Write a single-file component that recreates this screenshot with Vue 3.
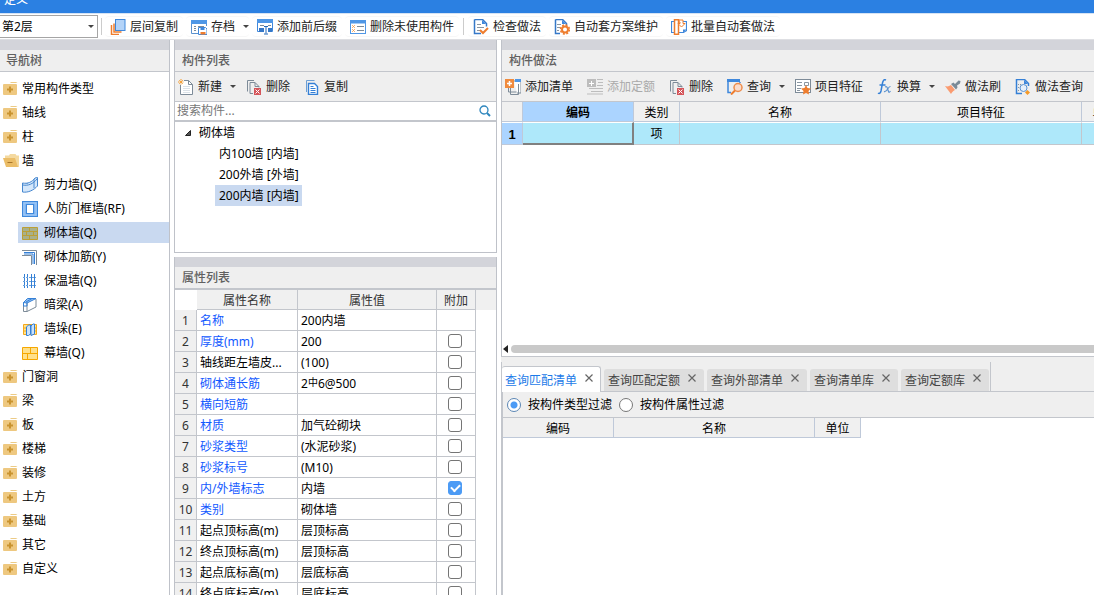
<script setup>
import { ref } from 'vue'

const icons = {
  layers: '<path d="M1.500 6v9.500H9M4 4.500V13h7.500" fill="none" stroke="#ee7d2e" stroke-width="1.500"/><rect x="5.500" y=".5" width="9.500" height="11" fill="#b3d3f8" stroke="#3f88dc"/>',
  archive: '<path d="M.5 3v11.500H7M15.500 3v4" fill="none" stroke="#5b92cf"/><path d="M0 1h16v4H0z" fill="#4f97e6"/><path d="M3 7.500h2M7 7.500h6M3 9.500h2M3 11.500h2" stroke="#7d8b98"/><path d="M7.500 8.500h7l1.500 1.500v5.500H7.500z" fill="#fff" stroke="#3f88dc"/><path d="M9.500 9h4v2h-4z" fill="#3f88dc"/><path d="M9.500 13h5v2.500h-5z" fill="#ee7d2e"/>',
  affix: '<path d="M.5 2v10.500H2M15.500 2v10.500H14" fill="none" stroke="#3f88dc"/><path d="M0 0h16v4H0z" fill="#4f97e6"/><path d="M3 6.500h4M11 6.500h3" stroke="#7d8b98"/><path d="M2 9h5v4H2zM11 9h4v4h-4z" fill="#3578c8"/><path d="M7 7.500h4M9 7.500v7M7 15h4" stroke="#2469b9" fill="none"/>',
  unused: '<rect x=".5" y="1.500" width="15" height="13" fill="#fff" stroke="#4f97e6"/><path d="M0 1h16v3.500H0z" fill="#4f97e6"/><path d="M2 6l3 3m0-3L2 9m0 1 3 3m0-3-3 3" stroke="#f4953b" stroke-dasharray="1 .5"/><path d="M7 7.500h7M7 11.500h7" stroke="#7d8b98"/>',
  check: '<path d="M1.500.5h8l4 4v3M1.500.5v14H8" fill="none" stroke="#3578c8" stroke-width="1.500"/><path d="M9 1v4h4z" fill="#3f88dc"/><path d="M4 5.500h4M4 8.500h7M4 11.500h3" stroke="#8a96a1"/><path d="m7 11 3 3 5-5" stroke="#ee7d2e" stroke-width="2" fill="none"/>',
  gear: '<path d="M1.500.5h7l4 4v2M1.500.5v14H6" fill="none" stroke="#3578c8" stroke-width="1.500"/><path d="M8 1v4h4z" fill="#3f88dc"/><path d="M3 5.500h4M3 8.500h3M3 11.500h2" stroke="#8a96a1"/><circle cx="11" cy="10.500" r="3" fill="#fff" stroke="#ee7d2e" stroke-width="2"/><circle cx="11" cy="10.500" r="4.500" fill="none" stroke="#ee7d2e" stroke-width="1.500" stroke-dasharray="2 1.534"/>',
  batch: '<path d="M3 2.500H.5v11H3M12 2.500h3.500v9l-3 2H8" fill="none" stroke="#3f88dc" stroke-width="1.200"/><rect x="3.500" y=".75" width="4" height="14.500" fill="#fff" stroke="#ee7d2e" stroke-width="1.500"/><path d="M8 1h4v3.500h2L10.500 8 7 4.500h2V3H8z" fill="#fff" stroke="#ee7d2e"/><path d="M12 13.500v-3h3.500z" fill="#3f88dc"/>',
  create: '<path d="M2.500 6v9.500h12V5.500l-4-4H6" fill="#fff" stroke="#7d8b98"/><path d="M10.500 1.500v4h4" fill="none" stroke="#7d8b98"/><path d="M5 7.500h7M5 9.500h7M5 11.500h7M5 13.500h7" stroke="#dbe2e8"/><path d="m1 1 4 4m0-4L1 5M3 0v6M0 3h6" stroke="#f59a28" stroke-dasharray="1 .5"/>',
  remove: '<path d="M1.500 12.500v-11H8M4 14.500V3.500h5l4 4v1M4 14.500h3M9 3.500v4h4" fill="none" stroke="#7d8b98"/><path d="M8 9h7v7H8z" fill="#d5555a"/><path d="m9.500 10.500 4 4m0-4-4 4" stroke="#fff"/>',
  copy: '<path d="M2.500 13V1.500h8" fill="none" stroke="#6d9fd4"/><path d="M4.500 4.500h6l3 3v8h-9z" fill="#fff" stroke="#3580d6" stroke-width="1.400"/><path d="M6.500 7.500h3M6.500 9.500h5M6.500 11.500h5M6.500 13.500h5" stroke="#3580d6"/>',
  addList: '<path d="M9 2h7v12h-4" fill="#fff" stroke="#7d8b98"/><path d="M10 0h6v3h-6z" fill="#4f97e6"/><path d="M5.500 9v6.500h8V5M3.500 9v4h8" fill="none" stroke="#7d8b98"/><path d="M0 0h9v9H0z" fill="#f08b3e"/><path d="M4.500 2v5M2 4.500h5" stroke="#fff" stroke-width="1.500"/>',
  addQuota: '<path d="M0 0h9v8H0z" fill="#bdbdbd"/><path d="M4.500 2v5M2 4.500h5" stroke="#fff"/><path d="M10 .5h6M11 3.500h5M10 6.500h6M2 9.500h14M4 12.500h12M0 15h16" stroke="#bdbdbd"/>',
  find: '<path d="M1 3v10.500h3M13 3v1" fill="none" stroke="#3f88dc" stroke-width="1.500"/><path d="M0 0h13v3H0z" fill="#3f88dc"/><circle cx="11" cy="8.500" r="4" fill="#fbdccb" stroke="#ee8c4b" stroke-width="1.500"/><path d="m8 11.500-4 4" stroke="#ee7d2e" stroke-width="2"/>',
  feature: '<rect x=".5" y=".5" width="15" height="13" fill="#fff" stroke="#7d8b98"/><path d="M2 3.500h5M2 6.500h5M2 9.500h4M2 11.500h3" stroke="#8a96a1"/><path d="M9.500 3.500h4v3h-4z" fill="none" stroke="#8a96a1"/><path d="m11 6 1.500 3 3.500.5-2.500 2.500.5 3.500-3-1.500-3 1.500.500-3.500L6 9.500 9.500 9z" fill="#ee7d2e"/>',
  fx: '<path d="M9 1C7 0 6 1.500 5.500 4L4 12c-.5 2-1.500 3-3 2M2.500 6h6" fill="none" stroke="#3580d6" stroke-width="1.500"/><path d="M8 8c2-1 2 0 3 3s1 3 2.500 1M13.500 7.500C11 7 10 14 7 12.500" fill="none" stroke="#5b92cf" stroke-width="1.200"/>',
  brush: '<path d="M0 7c3 1 4 0 6-1l4 5c-2 1-3 2-4 4z" fill="#fa9b70"/><path d="m6 5 2.500-1.500L10 5l3.500-3.500L15.500 2l-.5 2.500-3 2 .5 2L11 10.500z" fill="#7b8b98"/>',
  lookup: '<path d="M13.500 7V4.500l-4-4h-8v14H7" fill="none" stroke="#3580d6" stroke-width="1.500"/><path d="M9 1v4h4z" fill="#3f88dc"/><path d="M3 5.500h3M3 8.500h2M3 11.500h2" stroke="#8a96a1" stroke-dasharray="1 1"/><circle cx="8.500" cy="9" r="3.500" fill="#e6f0fb" stroke="#5b92cf"/><path d="m12.500 11 2.500 2.500-2.500 2.500-2.500-2.500z" fill="#f59a28"/>',
  closed: '<path d="M8 1h5l1.500 1H7z" fill="#eccb86"/><path d="M1 3h12q1 0 1 1v9q0 1-1 1H1q-1 0-1-1V4q0-1 1-1z" fill="#eec880"/><path d="M7 5.500v6M4 8.500h6" stroke="#c9932f" stroke-width="2"/>',
  open: '<path d="M7 1h5.500l1 1.500H16V14h-2L11 5H2V2.500h4z" fill="#f4d99f"/><path d="M0 5h12l3 9H3z" fill="#ebbd67"/><path d="M4.500 9.500h5" stroke="#a8762b"/>',
  shear: '<path d="M.5 6C6 7 10 5 13 1l2.500-.5V9C12 13 6 16 .5 15z" fill="#d4e7fb" stroke="#4687cf"/><path d="M1 8c5 1 10-1 14-6M12 2v9M5 7V6" fill="none" stroke="#4687cf"/>',
  frame: '<rect x=".5" y=".5" width="15" height="15" fill="#7db3f1" stroke="#3f88dc"/><rect x="2" y="2" width="12" height="12" fill="none" stroke="#a5cbf5"/><rect x="4.500" y="3.500" width="7" height="9" fill="#fff" stroke="#3f88dc"/>',
  brick: '<path d="M.5 2.500h15v12H.5zM.5 6.500h15M.5 10.500h15M7.500 2.500v4M4.500 6.500v4M11.500 6.500v4M7.500 10.500v4" fill="#a8b08c" stroke="#bb9f35"/>',
  rebar: '<path d="M0 1.500h14.500V16M0 6.500h9.500V16" fill="none" stroke="#7d8b98"/><path d="M2 3.500h10.500V15M2 5h9v10" fill="none" stroke="#3580d6"/>',
  insul: '<path d="M2.500 1v14M5.500 1v14M9.500 1v14M12.500 1v14" stroke="#3580d6"/><path d="M1 4.500h13M1 8.500h13M1 12.500h13" stroke="#6aa3df" stroke-dasharray="2 1"/>',
  beam: '<path d="M1.500 5.500v9H5L14 10V2" fill="#fff" stroke="#7d8b98"/><path d="M5 14.500V6" stroke="#7d8b98"/><path d="M1.500 5.500 5.500 1.500H14L5 6z" fill="#8fc0f5" stroke="#3580d6"/><path d="M1.500 5.500V9H5V6M4 5l6-3.500" fill="none" stroke="#3580d6"/>',
  pier: '<path d="M1.500 3.500h13v10h-13zM1 7h14M1 10h14" fill="#ffe38f" stroke="#f5a91b"/><path d="m4.500 6 2-2h2v9l-2 1.500h-2zM9 5l2-2h1.500v10L9 14.500z" fill="#cbe2fa" stroke="#3580d6"/>',
  curtain: '<path d="M.5 2.500h15v12H.5zM.5 8.500h15M8.500 2.500v6M5.500 8.500v6" fill="#ffe08a" stroke="#f6a700"/>',
}

const mainTools = [
  { t: '层间复制', i: 'layers' },
  { t: '存档', i: 'archive', menu: true },
  { t: '添加前后缀', i: 'affix' },
  { t: '删除未使用构件', i: 'unused' },
  { sep: true },
  { t: '检查做法', i: 'check' },
  { t: '自动套方案维护', i: 'gear' },
  { t: '批量自动套做法', i: 'batch' },
]
const listTools = [
  { t: '新建', i: 'create', menu: true },
  { t: '删除', i: 'remove' },
  { t: '复制', i: 'copy' },
]
const methodTools = [
  { t: '添加清单', i: 'addList' },
  { t: '添加定额', i: 'addQuota', off: true },
  { t: '删除', i: 'remove' },
  { t: '查询', i: 'find', menu: true },
  { t: '项目特征', i: 'feature' },
  { t: '换算', i: 'fx', menu: true },
  { t: '做法刷', i: 'brush' },
  { t: '做法查询', i: 'lookup' },
]
const top = (t) => ({ t, i: 'closed' })
const sub = (t, i) => ({ t, i, sub: true })
const nav = [
  top('常用构件类型'), top('轴线'), top('柱'), { t: '墙', i: 'open' },
  sub('剪力墙(Q)', 'shear'), sub('人防门框墙(RF)', 'frame'), sub('砌体墙(Q)', 'brick'),
  sub('砌体加筋(Y)', 'rebar'), sub('保温墙(Q)', 'insul'), sub('暗梁(A)', 'beam'),
  sub('墙垛(E)', 'pier'), sub('幕墙(Q)', 'curtain'),
  top('门窗洞'), top('梁'), top('板'), top('楼梯'), top('装修'), top('土方'),
  top('基础'), top('其它'), top('自定义'),
]
const activeNav = ref('砌体墙(Q)')

const components = ['内100墙 [内墙]', '200外墙 [外墙]', '200内墙 [内墙]']
const activeComponent = ref('200内墙 [内墙]')

const props = ref([
  { n: '名称', v: '200内墙', blue: true, plain: true },
  { n: '厚度(mm)', v: '200', blue: true },
  { n: '轴线距左墙皮...', v: '(100)' },
  { n: '砌体通长筋', v: '2', mark: '中', rest: '6@500', blue: true },
  { n: '横向短筋', v: '', blue: true },
  { n: '材质', v: '加气砼砌块', blue: true },
  { n: '砂浆类型', v: '(水泥砂浆)', blue: true },
  { n: '砂浆标号', v: '(M10)', blue: true },
  { n: '内/外墙标志', v: '内墙', blue: true, on: true },
  { n: '类别', v: '砌体墙', blue: true },
  { n: '起点顶标高(m)', v: '层顶标高' },
  { n: '终点顶标高(m)', v: '层顶标高' },
  { n: '起点底标高(m)', v: '层底标高' },
  { n: '终点底标高(m)', v: '层底标高' },
])

const tabs = ['查询匹配清单', '查询匹配定额', '查询外部清单', '查询清单库', '查询定额库']
const activeTab = ref(tabs[0])
const filter = ref('type')
const search = ref('')
</script>

<template>
  <div class="app">
    <header class="title">定义</header>

    <div class="maintools">
      <div class="floor">
        <select aria-label="楼层"><option>第2层</option></select>
        <i class="caret"></i>
      </div>
      <span class="sep"></span>
      <template v-for="(b, k) in mainTools" :key="k">
        <span v-if="b.sep" class="sep mid"></span>
        <button v-else type="button" class="boxed" :class="{ menu: b.menu }">
          <svg class="ic" viewBox="0 0 16 16" v-html="icons[b.i]"></svg>{{ b.t }}<i v-if="b.menu" class="caret"></i>
        </button>
      </template>
    </div>

    <main>
      <aside class="panel navpanel">
        <div class="strip"></div>
        <h2>导航树</h2>
        <ul class="nav">
          <li v-for="n in nav" :key="n.t">
            <button type="button" :class="{ sub: n.sub, active: n.t === activeNav }" @click="activeNav = n.t">
              <svg class="ic" viewBox="0 0 16 16" v-html="icons[n.i]"></svg>{{ n.t }}
            </button>
          </li>
        </ul>
      </aside>

      <div class="middle">
        <section class="panel boxpanel">
          <div class="strip"></div>
          <h2>构件列表</h2>
          <div class="tools">
            <button v-for="b in listTools" :key="b.t" type="button" :class="{ menu: b.menu }">
              <svg class="ic" viewBox="0 0 16 16" v-html="icons[b.i]"></svg>{{ b.t }}<i v-if="b.menu" class="caret"></i>
            </button>
          </div>
          <div class="search">
            <input v-model="search" type="text" placeholder="搜索构件..." aria-label="搜索构件" />
            <svg viewBox="0 0 12 12"><circle cx="5" cy="5" r="4" fill="none" stroke="#2e86bd" stroke-width="1.300" /><path d="m8 8 3 3" stroke="#2e86bd" stroke-width="2" /></svg>
          </div>
          <div class="tree">
            <div class="root"><svg viewBox="0 0 8 8"><path d="M6.500 1.500v5h-5z" fill="#555" stroke="#222" /></svg>砌体墙</div>
            <button v-for="c in components" :key="c" type="button" :class="{ active: c === activeComponent }" @click="activeComponent = c">{{ c }}</button>
          </div>
        </section>

        <section class="panel boxpanel props">
          <div class="strip"></div>
          <h2 class="thick">属性列表</h2>
          <table>
            <colgroup><col class="c-no" /><col class="c-name" /><col class="c-val" /><col class="c-add" /><col /></colgroup>
            <thead>
              <tr><th class="corner"></th><th>属性名称</th><th>属性值</th><th>附加</th><th class="fill"></th></tr>
            </thead>
            <tbody>
              <tr v-for="(p, k) in props" :key="p.n">
                <th scope="row">{{ k + 1 }}</th>
                <td :class="{ blue: p.blue }">{{ p.n }}</td>
                <td>{{ p.v }}<span v-if="p.mark" class="mark">{{ p.mark }}</span>{{ p.rest }}</td>
                <td class="tick"><input v-if="!p.plain" v-model="p.on" type="checkbox" :aria-label="p.n + ' 附加'" /></td>
                <td class="blank"></td>
              </tr>
            </tbody>
          </table>
        </section>
      </div>

      <div class="right">
        <section class="panel method">
          <div class="strip"></div>
          <h2>构件做法</h2>
          <div class="tools wide">
            <button v-for="b in methodTools" :key="b.t" type="button" :class="{ menu: b.menu }" :disabled="b.off">
              <svg class="ic" viewBox="0 0 16 16" v-html="icons[b.i]"></svg>{{ b.t }}<i v-if="b.menu" class="caret"></i>
            </button>
          </div>
          <div class="gridwrap">
            <table class="grid">
              <colgroup><col class="g-no" /><col class="g-code" /><col class="g-kind" /><col class="g-long" /><col class="g-long" /><col class="g-kind" /></colgroup>
              <thead>
                <tr><th></th><th class="cur">编码</th><th>类别</th><th>名称</th><th>项目特征</th><th>单位</th></tr>
              </thead>
              <tbody>
                <tr><th scope="row">1</th><td class="cell"></td><td>项</td><td></td><td></td><td></td></tr>
              </tbody>
            </table>
          </div>
          <div class="hscroll"><svg viewBox="0 0 5 8"><path d="M5 0v8L0 4z" fill="#222" /></svg><span></span></div>
        </section>

        <section class="query">
          <div class="tabs">
            <div v-for="t in tabs" :key="t" class="tab" :class="{ on: t === activeTab }">
              <button type="button" @click="activeTab = t">{{ t }}</button>
              <button type="button" class="x" :aria-label="'关闭' + t"><svg viewBox="0 0 8 8"><path d="m.5.5 7 7m0-7-7 7" stroke="#666" stroke-width="1.200" /></svg></button>
            </div>
            <span class="tabend"></span>
          </div>
          <div class="filters">
            <label><input v-model="filter" type="radio" name="filter" value="type" />按构件类型过滤</label>
            <label><input v-model="filter" type="radio" name="filter" value="prop" />按构件属性过滤</label>
          </div>
          <div class="result">
            <table>
              <colgroup><col class="g-code" /><col class="g-long" /><col class="g-kind" /></colgroup>
              <thead><tr><th>编码</th><th>名称</th><th>单位</th></tr></thead>
            </table>
          </div>
        </section>
      </div>
    </main>
  </div>
</template>

<style>
body { margin: 0; }
</style>

<style scoped>
.app {
  display: flex; flex-direction: column; height: 100vh; overflow: hidden;
  background: #fff; color: #000;
  font: 12px/18px "Noto Sans", "Noto Sans CJK SC", sans-serif;
}
.app * { box-sizing: border-box; }
button, input, select { font: inherit; color: inherit; }
button { display: flex; align-items: center; margin: 0; padding: 0; border: 0; background: none; white-space: nowrap; }
.ic { width: 16px; height: 16px; flex: none; }
.caret { border: 3px solid transparent; border-top-color: #444; border-bottom: 0; flex: none; }

.title {
  display: flex; align-items: flex-end; flex: none; height: 13px; padding: 0 4px 4px; overflow: hidden;
  background: #2b80e2; color: #fff;
}
.maintools {
  display: flex; align-items: center; gap: 3px; flex: none; height: 27px; overflow: hidden;
  border-top: 1px solid #d5e3f4; border-bottom: 1px solid #dedfe3;
}
.floor { position: relative; width: 98px; height: 23px; }
.floor select { width: 100%; height: 100%; padding: 0 2px; border: 1px solid #a5a5a5; border-left: 0; border-radius: 0; background: #fff; appearance: none; }
.floor .caret { position: absolute; right: 4px; top: 10px; }
.sep { width: 1px; height: 17px; background: #ccc; }
.sep.mid { margin: 0 1px; }
.boxed { gap: 4px; height: 21px; padding: 0 5px; border: 1px solid #f7f7f7; border-width: 1px 0; border-radius: 4px; color: #222; }
.menu .caret { margin-left: 4px; }
.boxed.menu { padding-right: 0; }

main { display: flex; gap: 4px; flex: 1; min-height: 0; }
.panel { display: flex; flex-direction: column; min-height: 0; }
.strip { flex: none; height: 10px; background: #d3d4da; }
h2 {
  flex: none; height: 22px; margin: 0; padding: 0 7px; border-bottom: 1px solid #c3c6cc;
  background: #efefef; color: #606060; font-size: 12px; font-weight: 500; line-height: 21px;
}
h2.thick { height: 23px; border-bottom-width: 2px; }
.navpanel { flex: none; width: 170px; border-right: 1px solid #bfc2c9; }
.navpanel h2 { padding-left: 6px; }
.nav { margin: 0; padding: 4px 0 0; list-style: none; }
.nav li { height: 24px; padding: 2px 0 1px; }
.nav button { gap: 3px; width: 100%; height: 21px; padding-left: 3px; }
.nav .sub { gap: 6px; width: calc(100% - 18px); margin-left: 18px; padding-left: 4px; }
.nav .active, .tree .active { background: #c9d9f0; }

.middle { display: flex; flex-direction: column; gap: 4px; flex: none; width: 323px; }
.boxpanel { border: 1px solid #bfc2c9; border-width: 0 1px 1px; }
.tools { display: flex; align-items: center; flex: none; height: 30px; overflow: hidden; border-bottom: 1px solid #c3c6cc; background: #efefef; color: #222; }
.tools button { gap: 4px; height: 100%; padding: 0 8px 0 6px; }
.tools button:first-child { padding-left: 3px; }
.tools .menu { padding-right: 4px; }
.tools.wide button { padding: 0 7px; }
.tools.wide button:first-child { padding-left: 3px; }
.tools.wide .menu { padding-right: 3px; }
.tools button:disabled { color: #aaa; }
.search { display: flex; align-items: center; flex: none; height: 20px; padding-right: 5px; border-bottom: 2px solid #c3c6cc; }
.search input { flex: 1; min-width: 0; height: 18px; padding: 0 2px; border: 0; background: none; outline: none; }
.search input::placeholder { color: #777; }
.search svg { width: 12px; height: 12px; }
.tree { height: 130px; }
.root { display: flex; align-items: center; gap: 7px; height: 21px; padding-left: 9px; }
.root svg { width: 8px; height: 8px; }
.tree button { height: 21px; margin-left: 40px; padding: 0 3px 0 4px; }

.props { flex: 1; overflow: hidden; border-bottom: 0; }
table { border-collapse: separate; border-spacing: 0; table-layout: fixed; }
th, td { height: 21px; padding: 2px 0 0; overflow: hidden; font-weight: 400; line-height: 18px; white-space: nowrap; border: 1px solid #c3c6cc; border-width: 0 1px 1px 0; }
.props table { flex: none; width: 100%; }
.c-no { width: 22px; }
.c-name { width: 101px; }
.c-val { width: 139px; }
.c-add { width: 39px; }
.props th { background: #f0f0f0; color: #333; }
.props thead th { height: 20px; line-height: 17px; }
.props thead .corner { background: #fff; border-color: #fff; }
.props .fill { border: 0; }
.props td { padding: 2px 3px 0; }
.props td.blue { color: #1259ff; }
.props td.blank { border: 0; }
.mark { font-size: 10px; line-height: 10px; vertical-align: 2px; }
.props td.tick { padding: 0 2px 0 0; }
.tick input {
  display: block; width: 14px; height: 14px; margin: 0 auto; border: 1px solid #757575; border-radius: 3px;
  appearance: none; background: #fff;
}
.tick input:checked { border-color: #4c9bf5; background: #4c9bf5; display: grid; place-items: center; }
.tick input:checked::after { content: ""; width: 7px; height: 4px; border: solid #fff; border-width: 0 0 2px 2px; rotate: -45deg; translate: 0 -1px; }

.right { display: grid; grid-template-rows: 4fr 3fr; flex: 1; min-width: 0; }
.method { min-width: 0; border-left: 1px solid #bfc2c9; border-bottom: 1px solid #c3c6cc; overflow: hidden; }
.gridwrap { flex: 1; min-height: 0; overflow: hidden; }
.grid { width: 626px; text-align: center; }
.g-no { width: 21px; }
.g-code { width: 111px; }
.g-kind { width: 46px; }
.g-long { width: 201px; }
.grid th { background: #f0f0f0; border-color: #bfc9d9; }
.grid thead th { height: 20px; line-height: 17px; }
.grid thead .cur, .grid tbody th { background: #abd4ff; font-weight: 700; }
.grid tbody th { font-family: "Liberation Sans", sans-serif; font-size: 13px; }
.grid tbody th, .grid td { height: 23px; border-top: 1px solid #fff; line-height: 18px; }
.grid td { padding-top: 0; background: #aee8fa; }
.grid .cell { border-right: 2px solid #808080; border-bottom: 2px solid #808080; }
.hscroll { display: flex; align-items: flex-start; gap: 3px; flex: none; height: 11px; padding-left: 1px; }
.hscroll svg { width: 5px; height: 8px; }
.hscroll span { flex: 1; height: 8px; border-radius: 4px 0 0 4px; background: #c9c9c9; }

.query { display: flex; flex-direction: column; min-width: 0; min-height: 0; padding-top: 5px; background: #efefef; }
.tabs { display: flex; align-items: flex-end; gap: 3px; height: 30px; border-bottom: 1px solid #c3c6cc; border-left: 1px solid #c3c6cc; }
.tab { display: flex; gap: 8px; height: 22px; padding: 2px 8px 0 4px; border-radius: 3px 3px 0 0; background: #dedede; color: #444; }
.tab.on { height: 26px; margin-bottom: -1px; padding: 2px 7px 0 3px; border: 1px solid #c3c6cc; border-width: 1px 1px 0 0; background: #fff; color: #1d7be8; }
.tab .x { align-self: flex-start; height: 14px; }
.tab.on .x { height: 18px; }
.x svg { width: 8px; height: 8px; }
.tabend { width: 1px; height: 29px; margin-left: -2px; background: #c3c6cc; }
.filters { display: flex; align-items: center; gap: 7px; flex: none; height: 26px; padding-left: 4px; border-left: 2px solid #c3c6cc; border-bottom: 1px solid #c3c6cc; }
.filters label { display: flex; align-items: center; gap: 7px; }
.filters input { width: 14px; height: 14px; margin: 0; border: 1px solid #777; border-radius: 50%; appearance: none; background: #fff; }
.filters input:checked { border-color: #5c87b5; background: radial-gradient(circle, #4c9bf5 3px, #fff 4px); }
.result { flex: 1; min-height: 0; overflow: hidden; border-left: 2px solid #c3c6cc; background: #fff; }
.result table { width: 358px; }
.result th { height: 20px; line-height: 17px; background: #f0f0f0; border-color: #bfc9d9; }
</style>
